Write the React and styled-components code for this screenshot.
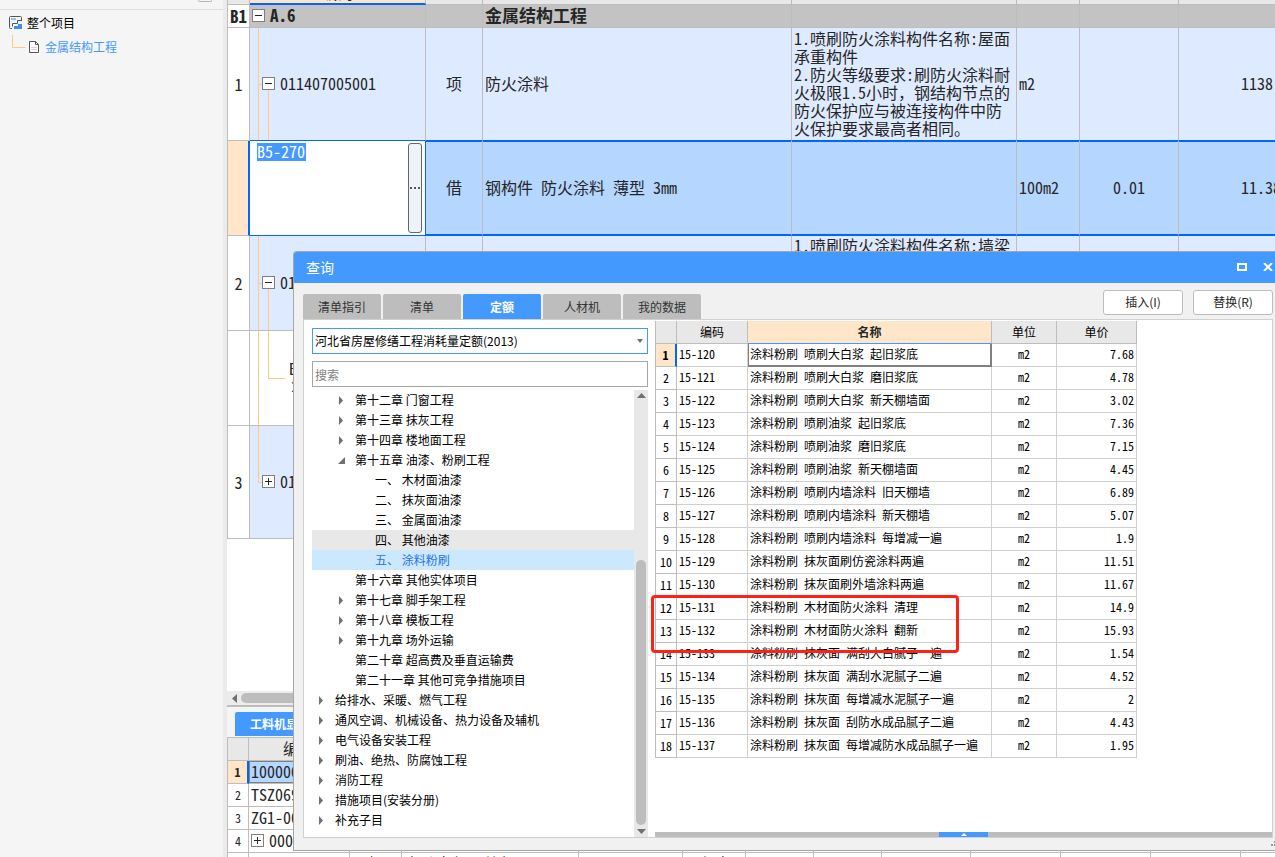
import * as React from "react";
import styled, { createGlobalStyle, css } from "styled-components";

const GlobalStyle = createGlobalStyle`
  * { box-sizing: border-box; }
  body {
    margin: 0;
    background: #f5f5f5;
    color: #000;
    font-family: "Noto Sans CJK SC", sans-serif;
    font-size: 12px;
    line-height: 18px;
  }
  button, input, select { font: inherit; color: inherit; }
`;

const halfWidth = css`
  font-family: "Noto Sans CJK SC", monospace;
  font-feature-settings: "hwid";
`;

const Page = styled.div`
  position: relative;
  display: flex;
  height: 100vh;
  overflow: hidden;
`;

/* project tree on the left */

const Sidebar = styled.aside`
  display: flex;
  flex-direction: column;
  flex: none;
  width: 227px;
  background: #f5f5f5;
  border-right: 4px solid #ebebeb;
`;

const SidebarTop = styled.div`
  height: 10px;
  flex: none;
  display: flex;
  justify-content: flex-end;
  align-items: flex-start;
  padding-right: 11px;
  border-bottom: 1px solid #dedede;
`;

const CollapseHandle = styled.button`
  width: 14px;
  height: 2px;
  padding: 0;
  border: 1px solid #b4b4b4;
  border-top: 0;
  border-radius: 0 0 3px 3px;
  background: #f5f5f5;
`;

const ProjectRow = styled.div`
  display: flex;
  align-items: center;
  height: 24px;
  gap: 4px;
  padding-left: 9px;
`;

const ProjectTree = styled.nav`
  padding-top: 1px;
`;

const ProjectLink = styled.a`
  color: #4499ff;
  text-decoration: none;
`;

const LinkIcons = styled.svg`
  flex: none;
`;

/* bill of quantities grid */

const Main = styled.main`
  flex: 1;
  min-width: 0;
  display: flex;
  flex-direction: column;
  background: #fff;
`;

const BillArea = styled.section`
  flex: 1;
  min-height: 0;
  overflow: hidden;
`;

const GridTable = styled.table`
  ${halfWidth}
  table-layout: fixed;
  width: ${(p) => p.$width}px;
  border-spacing: 0;
  border-left: 1px solid #bdbdbd;
  font-size: 16px;
  line-height: 18px;
  color: #262626;
  margin-top: ${(p) => (p.$scrolled ? "-18px" : "0")};

  th, td {
    padding: 0 2px 2px;
    font-weight: normal;
    text-align: left;
    border-right: 1px solid #bdbdbd;
    border-bottom: 1px solid #bdbdbd;
    white-space: nowrap;
    overflow: hidden;
  }
`;

const HeadRow = styled.tr`
  height: 23px;
  background: #e8e8e8;
  && th { text-align: center; }
`;

const ActiveHead = styled.th`
  background: #ffe6c8;
  ${GridTable} && { border-bottom: 2px solid #0066ff; }
`;

const BillRow = styled.tr`
  height: ${(p) => p.$height}px;
  background: ${(p) => p.$bg};
  ${(p) => p.$bold && css`
    ${GridTable} && td, ${GridTable} && th { font-weight: bold; font-size: 17px; }
  `}
  ${(p) => p.$aboveSelected && css`
    ${GridTable} & td { border-bottom-color: #0066ff; }
  `}
  ${(p) => p.$selected && css`
    ${GridTable} & td {
      border-bottom: 2px solid #0066ff;
      box-shadow: inset 0 1px #0066ff;
    }
  `}
`;

const RowHead = styled.th`
  background: ${(p) => (p.$active ? "#ffe6c8" : "#fff")};
  ${GridTable} && {
    text-align: center;
    padding: 0;
    ${(p) => p.$active && "border-right: 2px solid #0066ff;"}
  }
`;

const Centered = styled.td`
  ${GridTable} && { text-align: center; }
`;

const Amount = styled.td`
  ${GridTable} && { text-align: right; }
`;

const Note = styled.td`
  ${GridTable} && {
    white-space: pre-wrap;
    word-break: break-all;
    vertical-align: ${(p) => (p.$top ? "top" : "middle")};
  }
`;

const Punctuation = styled.span`
  font-feature-settings: normal;
`;

const line = "linear-gradient(#ffca80, #ffca80)";
const guideStyles = {
  branch: css`
    background:
      ${line} 8px 0 / 1px 100% no-repeat,
      ${line} 8px 50% / 6px 1px no-repeat,
      ${line} 18px 100% / 1px 50% no-repeat;
  `,
  leaf: css`
    background:
      ${line} 8px 0 / 1px 100% no-repeat,
      ${line} 18px 0 / 1px 50% no-repeat,
      ${line} 18px 50% / 17px 1px no-repeat;
  `,
  last: css`
    background:
      ${line} 8px 0 / 1px 50% no-repeat,
      ${line} 8px 50% / 6px 1px no-repeat;
  `,
};

const CodeCell = styled.td`
  ${(p) => guideStyles[p.$guide]}
  ${GridTable} && { padding-left: ${(p) => p.$indent ?? 2}px; }
`;

const CodeLine = styled.div`
  display: flex;
  align-items: center;
  gap: 5px;
`;

const ToggleButton = styled.button`
  flex: none;
  display: flex;
  width: 13px;
  height: 13px;
  padding: 0;
  border: 1px solid #808080;
  background: #fff;
`;

const EditorCell = styled.td`
  background: #fff;
  ${GridTable} ${BillRow} && {
    padding: 1px 3px 2px 7px;
    border-bottom: 1px solid #0066ff;
    border-right: 1px solid #0066ff;
    box-shadow: none;
  }
`;

const Editor = styled.div`
  display: flex;
  justify-content: space-between;
  align-items: flex-start;
`;

const CodeInput = styled.input`
  width: 49px;
  height: 18px;
  padding: 0 0 1px;
  border: 0;
  outline: 0;
  background: #4499ff;
  color: #fff;
`;

const MoreButton = styled.button`
  display: flex;
  align-items: center;
  justify-content: center;
  width: 14px;
  height: 90px;
  padding: 0;
  border: 1px solid #666;
  border-radius: 3px;
  background: #edf2fb;
`;

const ScrollRow = styled.div`
  flex: none;
  display: flex;
  align-items: center;
  height: 16px;
  padding: 0 5px;
  background: #ececec;
  border-bottom: 2px solid #bdbdbd;
`;

const ScrollThumb = styled.div`
  width: 600px;
  height: 10px;
  border-radius: 5px;
  background: #bdbdbd;
`;

const DetailTabs = styled.div`
  flex: none;
  display: flex;
  align-items: flex-end;
  height: 30px;
  padding: 0 0 1px 8px;
  background: #f5f5f5;
`;

const DetailTab = styled.button`
  height: 24px;
  padding: 0 15px;
  border: 0;
  border-radius: 2px 2px 0 0;
  background: #4499ff;
  color: #fff;
  font-weight: bold;
`;

const DetailArea = styled.section`
  flex: none;
  height: 120px;
  overflow: hidden;
  border-top: 1px solid #bdbdbd;
`;

const DetailNumber = styled(RowHead)`
  ${GridTable} && {
    font-size: 12px;
    font-weight: ${(p) => (p.$active ? "bold" : "normal")};
  }
`;

const PickedCell = styled.td`
  background: #b5d6ff;
  ${GridTable} && { box-shadow: inset 0 0 0 1px #808080; }
`;

/* query window */

const Dialog = styled.div`
  position: absolute;
  left: 293px;
  top: 251px;
  right: 0;
  bottom: 6px;
  display: flex;
  flex-direction: column;
  border: 1px solid #a6a6a6;
  border-right: 0;
  border-radius: 4px 0 0 0;
  background: #f1f1f1;
`;

const TitleBar = styled.header`
  flex: none;
  display: flex;
  align-items: center;
  height: 31px;
  padding: 0 0 1px 12px;
  gap: 11px;
  border-radius: 3px 0 0 0;
  background: #4499ff;
  color: #fff;
`;

const Title = styled.h1`
  flex: 1;
  margin: 0;
  font-size: 14px;
  font-weight: normal;
`;

const WindowButton = styled.button`
  display: flex;
  align-items: center;
  justify-content: center;
  width: 15px;
  height: 20px;
  padding: 0;
  border: 0;
  background: none;
`;

const Toolbar = styled.div`
  flex: none;
  display: flex;
  align-items: flex-end;
  height: 36px;
  padding: 0 2px 0 9px;
  gap: 2px;
`;

const TabButton = styled.button`
  width: 78px;
  height: 25px;
  padding: 0;
  border: 0;
  border-radius: 2px 2px 0 0;
  background: ${(p) => (p.$active ? "#4499ff" : "#bdbdbd")};
  color: ${(p) => (p.$active ? "#fff" : "#333")};
  font-weight: ${(p) => (p.$active ? "bold" : "normal")};
`;

const Actions = styled.div`
  flex: 1;
  display: flex;
  justify-content: flex-end;
  align-self: flex-start;
  gap: 10px;
  padding-top: 7px;
`;

const ActionButton = styled.button`
  width: 80px;
  height: 25px;
  padding: 0 0 2px;
  border: 1px solid #bdbdbd;
  border-radius: 3px;
  background: #fff;
  color: #262626;
`;

const Panels = styled.div`
  flex: 1;
  min-height: 0;
  display: flex;
  margin: 0 2px 12px 9px;
`;

const QuotaPanel = styled.div`
  flex: none;
  width: 352px;
  display: flex;
  flex-direction: column;
  padding: 8px 7px 0 8px;
  border: 1px solid #d0d0d0;
  border-width: 1px 0 1px 1px;
  background: #fff;
`;

const SelectWrap = styled.div`
  display: grid;
  align-items: center;
  justify-items: end;
  > * { grid-area: 1 / 1; }
  > svg { margin-right: 5px; pointer-events: none; }
`;

const QuotaSelect = styled.select`
  appearance: none;
  width: 100%;
  height: 26px;
  padding: 0 2px;
  border: 1px solid #4499ff;
  border-radius: 0;
  background: #fff;
`;

const SearchInput = styled.input`
  flex: none;
  width: 100%;
  height: 26px;
  margin: 7px 0 3px;
  padding: 0 2px;
  border: 1px solid #a6a6a6;
  &::placeholder { color: #808080; }
`;

const TreeArea = styled.div`
  flex: 1;
  min-height: 0;
  display: flex;
`;

const TreeList = styled.ul`
  flex: 1;
  margin: 0;
  padding: 0;
  list-style: none;
`;

const TreeItem = styled.li`
  display: flex;
  align-items: center;
  height: 20px;
  padding-left: ${(p) => p.$level * 20 - 14}px;
  background: ${(p) => (p.$selected ? "#cce8ff" : p.$hovered ? "#e8e8e8" : "none")};
  color: ${(p) => (p.$selected ? "#2277e6" : "#000")};
`;

const Arrow = styled.span`
  display: flex;
  width: 17px;
`;

const VerticalScroll = styled.div`
  display: flex;
  flex-direction: column;
  align-items: center;
  width: 14px;
  padding-top: 2px;
  background: #e8e8e8;
`;

const VerticalThumb = styled.div`
  width: 10px;
  height: 265px;
  margin-top: auto;
  margin-bottom: 3px;
  border-radius: 5px;
  background: #bdbdbd;
`;

const ResultPanel = styled.div`
  position: relative;
  flex: 1;
  min-width: 0;
  display: flex;
  flex-direction: column;
  justify-content: space-between;
  padding-top: 1px;
  border: 1px solid #d0d0d0;
  border-left: 0;
  background: #fff;
`;

const ResultTable = styled(GridTable)`
  font-size: 12px;
  color: #000;
  && td { border-color: #d0d0d0; padding-bottom: 3px; }
  && th { padding-bottom: 1px; }
  tr { height: 23px; }
`;

const NameHead = styled.th`
  background: #ffe6c8;
  ${GridTable} ${HeadRow} && { font-weight: bold; border-bottom-color: #4499ff; color: #262626; }
`;

const CurrentName = styled.td`
  ${ResultTable} && {
    border-color: #808080;
    box-shadow: inset 1px -1px #808080, inset -1px 0 #808080;
  }
`;

const RedMark = styled.div`
  position: absolute;
  left: -4px;
  top: 275px;
  width: 308px;
  height: 58px;
  border: 3px solid #ff2214;
  border-radius: 4px;
`;

const Splitter = styled.div`
  display: flex;
  justify-content: center;
  height: 5px;
  background: #bdbdbd;
`;

const SplitterHandle = styled.button`
  display: flex;
  align-items: center;
  justify-content: center;
  width: 49px;
  height: 5px;
  padding: 0;
  border: 0;
  background: #4499ff;
`;

const Grip = styled.svg`
  position: absolute;
  right: 0;
  bottom: 4px;
`;

const tabs = ["清单指引", "清单", "定额", "人材机", "我的数据"];

const tree = [
  { level: 2, label: "第十二章 门窗工程", arrow: "closed" },
  { level: 2, label: "第十三章 抹灰工程", arrow: "closed" },
  { level: 2, label: "第十四章 楼地面工程", arrow: "closed" },
  { level: 2, label: "第十五章 油漆、粉刷工程", arrow: "open" },
  { level: 3, label: "一、 木材面油漆" },
  { level: 3, label: "二、 抹灰面油漆" },
  { level: 3, label: "三、 金属面油漆" },
  { level: 3, label: "四、 其他油漆", hovered: true },
  { level: 3, label: "五、 涂料粉刷", selected: true },
  { level: 2, label: "第十六章 其他实体项目" },
  { level: 2, label: "第十七章 脚手架工程", arrow: "closed" },
  { level: 2, label: "第十八章 模板工程", arrow: "closed" },
  { level: 2, label: "第十九章 场外运输", arrow: "closed" },
  { level: 2, label: "第二十章 超高费及垂直运输费" },
  { level: 2, label: "第二十一章 其他可竞争措施项目" },
  { level: 1, label: "给排水、采暖、燃气工程", arrow: "closed" },
  { level: 1, label: "通风空调、机械设备、热力设备及辅机", arrow: "closed" },
  { level: 1, label: "电气设备安装工程", arrow: "closed" },
  { level: 1, label: "刷油、绝热、防腐蚀工程", arrow: "closed" },
  { level: 1, label: "消防工程", arrow: "closed" },
  { level: 1, label: "措施项目(安装分册)", arrow: "closed" },
  { level: 1, label: "补充子目", arrow: "closed" },
];

const results = [
  ["15-120", "涂料粉刷 喷刷大白浆 起旧浆底", "7.68"],
  ["15-121", "涂料粉刷 喷刷大白浆 磨旧浆底", "4.78"],
  ["15-122", "涂料粉刷 喷刷大白浆 新天棚墙面", "3.02"],
  ["15-123", "涂料粉刷 喷刷油浆 起旧浆底", "7.36"],
  ["15-124", "涂料粉刷 喷刷油浆 磨旧浆底", "7.15"],
  ["15-125", "涂料粉刷 喷刷油浆 新天棚墙面", "4.45"],
  ["15-126", "涂料粉刷 喷刷内墙涂料 旧天棚墙", "6.89"],
  ["15-127", "涂料粉刷 喷刷内墙涂料 新天棚墙", "5.07"],
  ["15-128", "涂料粉刷 喷刷内墙涂料 每增减一遍", "1.9"],
  ["15-129", "涂料粉刷 抹灰面刷仿瓷涂料两遍", "11.51"],
  ["15-130", "涂料粉刷 抹灰面刷外墙涂料两遍", "11.67"],
  ["15-131", "涂料粉刷 木材面防火涂料 清理", "14.9"],
  ["15-132", "涂料粉刷 木材面防火涂料 翻新", "15.93"],
  ["15-133", "涂料粉刷 抹灰面 满刮大白腻子一遍", "1.54"],
  ["15-134", "涂料粉刷 抹灰面 满刮水泥腻子二遍", "4.52"],
  ["15-135", "涂料粉刷 抹灰面 每增减水泥腻子一遍", "2"],
  ["15-136", "涂料粉刷 抹灰面 刮防水成品腻子二遍", "4.43"],
  ["15-137", "涂料粉刷 抹灰面 每增减防水成品腻子一遍", "1.95"],
];

const billColumns = [22, 176, 57, 309, 225, 63, 99, 113];
const detailColumns = [21, 101, 52, 177, 104, 63, 68, 68, 89, 90, 90, 90, 80];
const resultColumns = [21, 71, 244, 65, 80];

const sum = (widths) => widths.reduce((a, b) => a + b, 1);

function Columns({ widths }) {
  return (
    <colgroup>
      {widths.map((width, i) => (
        <col key={i} style={{ width }} />
      ))}
    </colgroup>
  );
}

function Toggle({ open }) {
  return (
    <ToggleButton type="button" aria-label={open ? "折叠" : "展开"}>
      <svg width="11" height="11" viewBox="0 0 11 11" shapeRendering="crispEdges">
        <path d={open ? "M2 5.5h7" : "M2 5.5h7M5.5 2v7"} stroke="#262626" />
      </svg>
    </ToggleButton>
  );
}

const arrowPaths = {
  closed: "M1 0L5 4.5L1 9Z",
  open: "M7 1V8H0Z",
  up: "M0 6L4.5 1L9 6Z",
  down: "M0 1L4.5 6L9 1Z",
  left: "M5 0L0 4.5L5 9Z",
};

function Triangle({ kind }) {
  return (
    <svg width="9" height="9" viewBox="0 0 9 9">
      <path d={arrowPaths[kind]} fill="#707070" />
    </svg>
  );
}

function ProjectPane() {
  return (
    <Sidebar>
      <SidebarTop>
        <CollapseHandle type="button" aria-label="收起" />
      </SidebarTop>
      <ProjectTree>
        <ProjectRow>
          <LinkIcons width="14" height="14" viewBox="0 0 14 14" fill="none">
            <path d="M12.5 4V1.5a1 1 0 0 0-1-1h-10a1 1 0 0 0-1 1v10a1 1 0 0 0 1 1H3" stroke="#555" />
            <path d="M2 2h5v2H2z" fill="#8cc0ff" />
            <path d="M13 4.500H8.500v3h-5v3" stroke="#555" />
            <path d="M5 13v-3h4V8h4v5z" fill="#3b8ef5" />
          </LinkIcons>
          整个项目
        </ProjectRow>
        <ProjectRow>
          <LinkIcons width="32" height="24" viewBox="0 0 32 24" fill="none">
            <path d="M3.5 0v12.500h13" stroke="#ffca80" />
            <path d="M20.500 6.500h6l3 3v8h-9z" fill="#fff" stroke="#555" />
            <path d="M26.500 6.500v3h3" stroke="#555" />
            <path d="M22 12.500h6M22 14.500h6" stroke="#d6d6d6" />
          </LinkIcons>
          <ProjectLink href="#project">金属结构工程</ProjectLink>
        </ProjectRow>
      </ProjectTree>
    </Sidebar>
  );
}

function BillGrid() {
  return (
    <BillArea>
      <GridTable $width={sum(billColumns)} $scrolled>
        <Columns widths={billColumns} />
        <thead>
          <HeadRow>
            <th />
            <ActiveHead>编码</ActiveHead>
            <th /><th /><th /><th /><th /><th />
          </HeadRow>
        </thead>
        <tbody>
          <BillRow $height={23} $bg="#c3c3c3" $bold>
            <RowHead>B1</RowHead>
            <CodeCell>
              <CodeLine><Toggle open />A.6</CodeLine>
            </CodeCell>
            <td />
            <td>金属结构工程</td>
            <td /><td /><td /><td />
          </BillRow>
          <BillRow $height={113} $bg="#deeaff" $aboveSelected>
            <RowHead>1</RowHead>
            <CodeCell $guide="branch" $indent={12}>
              <CodeLine><Toggle open />011407005001</CodeLine>
            </CodeCell>
            <Centered>项</Centered>
            <td>防火涂料</td>
            <Note>
              {"1.喷刷防火涂料构件名称:屋面承重构件\n2.防火等级要求:刷防火涂料耐火极限1.5小时"}
              <Punctuation>，</Punctuation>
              钢结构节点的防火保护应与被连接构件中防火保护要求最高者相同
              <Punctuation>。</Punctuation>
            </Note>
            <td>m2</td>
            <td />
            <Amount>1138.3</Amount>
          </BillRow>
          <BillRow $height={95} $bg="#b5d6ff" $selected>
            <RowHead $active />
            <EditorCell>
              <Editor>
                <CodeInput aria-label="编码" defaultValue="B5-270" />
                <MoreButton type="button" aria-label="更多">
                  <svg width="10" height="2" viewBox="0 0 10 2">
                    <path d="M0 0h2v2H0zM4 0h2v2H4zM8 0h2v2H8z" fill="#555" />
                  </svg>
                </MoreButton>
              </Editor>
            </EditorCell>
            <Centered>借</Centered>
            <td>钢构件 防火涂料 薄型 3mm</td>
            <td />
            <td>100m2</td>
            <Centered>0.01</Centered>
            <Amount>11.383</Amount>
          </BillRow>
          <BillRow $height={95} $bg="#deeaff">
            <RowHead>2</RowHead>
            <CodeCell $guide="branch" $indent={12}>
              <CodeLine><Toggle open />011407005002</CodeLine>
            </CodeCell>
            <td />
            <td />
            <Note $top>1.喷刷防火涂料构件名称:墙梁</Note>
            <td /><td /><td />
          </BillRow>
          <BillRow $height={95} $bg="#fff">
            <RowHead />
            <CodeCell $guide="leaf" $indent={39}>B5-270<br />×2</CodeCell>
            <td /><td /><td /><td /><td /><td />
          </BillRow>
          <BillRow $height={113} $bg="#deeaff">
            <RowHead>3</RowHead>
            <CodeCell $guide="last" $indent={12}>
              <CodeLine><Toggle />011407005003</CodeLine>
            </CodeCell>
            <td /><td /><td /><td /><td /><td />
          </BillRow>
        </tbody>
      </GridTable>
    </BillArea>
  );
}

function DetailGrid() {
  const blanks = (from) => detailColumns.slice(from).map((_, i) => <td key={i} />);
  return (
    <DetailArea>
      <GridTable $width={sum(detailColumns)}>
        <Columns widths={detailColumns} />
        <tbody>
          <HeadRow>
            <th />
            <th>编码</th>
            {blanks(2)}
          </HeadRow>
          <BillRow $height={23}>
            <DetailNumber $active>1</DetailNumber>
            <PickedCell>10000001</PickedCell>
            {blanks(2)}
          </BillRow>
          <BillRow $height={23}>
            <DetailNumber>2</DetailNumber>
            <td>TSZ0697</td>
            {blanks(2)}
          </BillRow>
          <BillRow $height={23}>
            <DetailNumber>3</DetailNumber>
            <td>ZG1-0001</td>
            {blanks(2)}
          </BillRow>
          <BillRow $height={23}>
            <DetailNumber>4</DetailNumber>
            <td>
              <CodeLine><Toggle />00006</CodeLine>
            </td>
            {blanks(2)}
          </BillRow>
          <BillRow $height={23}>
            <DetailNumber />
            <td />
            <Centered>机</Centered>
            <td>电动空气压缩机</td>
            <td />
            <Centered>台班</Centered>
            {blanks(6)}
          </BillRow>
        </tbody>
      </GridTable>
    </DetailArea>
  );
}

function QuotaTree() {
  return (
    <QuotaPanel>
      <SelectWrap>
        <QuotaSelect aria-label="定额库">
          <option>河北省房屋修缮工程消耗量定额(2013)</option>
        </QuotaSelect>
        <svg width="6" height="4" viewBox="0 0 6 4">
          <path d="M0 0h6L3 4z" fill="#707070" />
        </svg>
      </SelectWrap>
      <SearchInput aria-label="搜索" placeholder="搜索" />
      <TreeArea>
        <TreeList>
          {tree.map((item) => (
            <TreeItem
              key={item.label}
              $level={item.level}
              $selected={item.selected}
              $hovered={item.hovered}
            >
              <Arrow>{item.arrow && <Triangle kind={item.arrow} />}</Arrow>
              {item.label}
            </TreeItem>
          ))}
        </TreeList>
        <VerticalScroll>
          <Triangle kind="up" />
          <VerticalThumb />
          <Triangle kind="down" />
        </VerticalScroll>
      </TreeArea>
    </QuotaPanel>
  );
}

function ResultGrid() {
  return (
    <ResultPanel>
      <ResultTable $width={sum(resultColumns)}>
        <Columns widths={resultColumns} />
        <thead>
          <HeadRow>
            <th />
            <th>编码</th>
            <NameHead>名称</NameHead>
            <th>单位</th>
            <th>单价</th>
          </HeadRow>
        </thead>
        <tbody>
          {results.map(([code, name, price], i) => (
            <tr key={code}>
              <DetailNumber $active={i === 0}>{i + 1}</DetailNumber>
              <td>{code}</td>
              {i === 0 ? <CurrentName>{name}</CurrentName> : <td>{name}</td>}
              <Centered>m2</Centered>
              <Amount>{price}</Amount>
            </tr>
          ))}
        </tbody>
      </ResultTable>
      <RedMark />
      <Splitter>
        <SplitterHandle type="button" aria-label="展开">
          <svg width="6" height="3" viewBox="0 0 6 3">
            <path d="M0 3L3 0L6 3Z" fill="#fff" />
          </svg>
        </SplitterHandle>
      </Splitter>
    </ResultPanel>
  );
}

function QueryDialog() {
  return (
    <Dialog role="dialog" aria-label="查询">
      <TitleBar>
        <Title>查询</Title>
        <WindowButton type="button" aria-label="最大化">
          <svg width="10" height="8" viewBox="0 0 10 8">
            <path d="M1 1h8v6H1z" fill="none" stroke="#fff" strokeWidth="2" />
          </svg>
        </WindowButton>
        <WindowButton type="button" aria-label="关闭">
          <svg width="10" height="8" viewBox="0 0 10 8">
            <path d="M1 0L9 8M9 0L1 8" stroke="#fff" strokeWidth="2" />
          </svg>
        </WindowButton>
      </TitleBar>
      <Toolbar>
        {tabs.map((tab) => (
          <TabButton key={tab} type="button" $active={tab === "定额"}>
            {tab}
          </TabButton>
        ))}
        <Actions>
          <ActionButton type="button">插入(I)</ActionButton>
          <ActionButton type="button">替换(R)</ActionButton>
        </Actions>
      </Toolbar>
      <Panels>
        <QuotaTree />
        <ResultGrid />
      </Panels>
      <Grip width="4" height="5" viewBox="0 0 4 5">
        <path d="M0 3h2v2H0zM3 3h1v2H3zM3 0h1v2H3z" fill="#999" />
      </Grip>
    </Dialog>
  );
}

export default function App() {
  return (
    <Page>
      <GlobalStyle />
      <ProjectPane />
      <Main>
        <BillGrid />
        <ScrollRow>
          <Triangle kind="left" />
          <ScrollThumb />
        </ScrollRow>
        <DetailTabs>
          <DetailTab type="button">工料机显示</DetailTab>
        </DetailTabs>
        <DetailGrid />
      </Main>
      <QueryDialog />
    </Page>
  );
}
